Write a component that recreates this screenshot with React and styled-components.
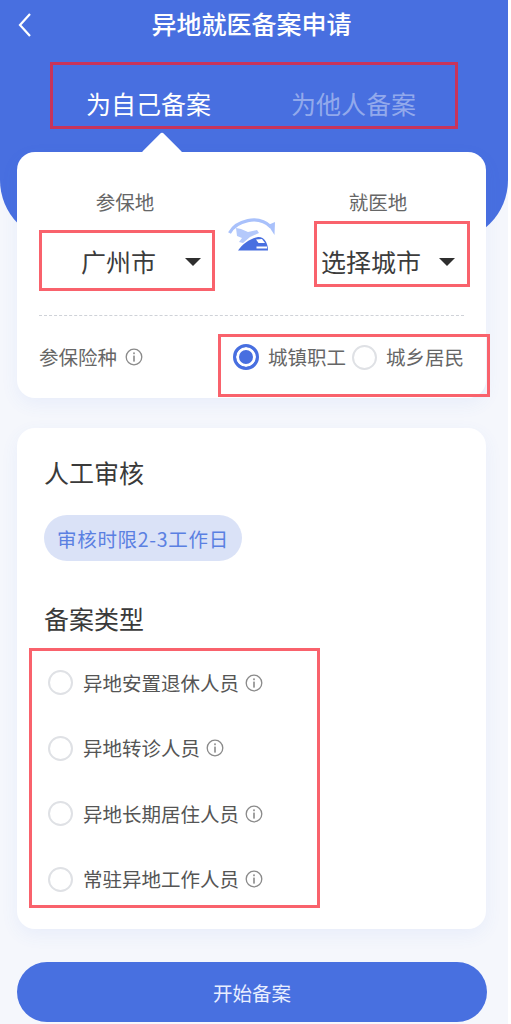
import React from "react";
import styled, { createGlobalStyle } from "styled-components";

const Global = createGlobalStyle`
  html, body { margin: 0; padding: 0; background: #fff; }
  body { font-family: "Noto Sans CJK SC", "Noto Sans", sans-serif; }
`;

const FONT = `"Noto Sans CJK SC", "Noto Sans", sans-serif`;

const Page = styled.div`
  position: relative;
  width: 508px;
  height: 1024px;
  overflow: hidden;
  background: #f5f7fc;
  font-family: ${FONT};
`;
const Hero = styled.div`
  height: 242px;
  margin-bottom: -90px;
  background: #486fe0;
  border-radius: 0 0 62px 62px;
  color: #fff;
`;
const TitleBar = styled.div`
  height: 50px;
  display: flex;
  align-items: center;
  justify-content: center;
  position: relative;
`;
const BackIcon = styled.svg`
  position: absolute;
  left: 17px;
  top: 12px;
`;
const Title = styled.div`
  font-size: 25px;
  font-weight: 500;
  line-height: 50px;
  margin: -4px 0 0 -5px;
`;
const Tabs = styled.div`
  display: flex;
  gap: 80px;
  padding: 30px 0 0 86px;
`;
const Tab = styled.div`
  font-size: 25px;
  line-height: 46px;
  color: ${(p) => (p.$active ? "#fff" : "rgba(255,255,255,0.42)")};
`;
const Card = styled.div`
  position: relative;
  margin: 0 22px 0 17px;
  background: #fff;
  border-radius: 18px;
  box-shadow: 0 6px 18px rgba(72, 111, 224, 0.07);
`;
const Pointer = styled.div`
  position: absolute;
  left: 130px;
  top: -14px;
  width: 30px;
  height: 30px;
  background: #fff;
  border-radius: 3px;
  transform: rotate(45deg);
`;
const LocationCard = styled(Card)`
  height: 246px;
  padding: 0 22px;
  box-sizing: border-box;
`;
const Places = styled.div`
  position: relative;
  display: grid;
  grid-template-columns: 172px 1fr 164px;
  height: 163px;
  border-bottom: 1px dashed #cfd2d8;
`;
const Place = styled.div`
  display: flex;
  flex-direction: column;
  align-items: center;
  padding-top: 37px;
  padding-right: ${(p) => p.$pr || 0}px;
`;
const PlaceLabel = styled.div`
  font-size: 19.5px;
  line-height: 26px;
  color: #666;
`;
const PlaceValue = styled.div`
  display: flex;
  align-items: center;
  gap: ${(p) => p.$gap}px;
  margin-top: 28px;
  margin-left: ${(p) => p.$offset || 0}px;
  font-size: 25px;
  line-height: 36px;
  color: #3c3c3c;
  white-space: nowrap;
`;
const Caret = styled.span`
  display: block;
  margin-top: 2px;
  width: 0;
  height: 0;
  border-left: 8px solid transparent;
  border-right: 8px solid transparent;
  border-top: 8px solid #2f2f2f;
`;
const SwapIcon = styled.svg`
  justify-self: center;
  margin-top: 65px;
  margin-left: -8px;
`;
const InsuranceRow = styled.div`
  display: flex;
  align-items: center;
  height: 82px;
`;
const RowLabel = styled.span`
  font-size: 19.5px;
  color: #666;
  line-height: 26px;
  white-space: nowrap;
`;
const InfoIcon = styled.svg`
  display: block;
  flex: none;
  margin-left: ${(p) => p.$ml}px;
`;
const Choices = styled.div`
  display: flex;
  align-items: center;
  margin-left: 90px;
`;
const Radio = styled.span`
  display: block;
  flex: none;
  box-sizing: border-box;
  width: ${(p) => (p.$checked ? 26 : 25)}px;
  height: ${(p) => (p.$checked ? 26 : 25)}px;
  border-radius: 50%;
  border: ${(p) => (p.$checked ? "3px solid #486fe0" : "2px solid #dfe1e5")};
  background: ${(p) => (p.$checked ? "#486fe0" : "#fff")};
  box-shadow: ${(p) => (p.$checked ? "inset 0 0 0 3px #fff" : "none")};
`;
const ChoiceText = styled.span`
  font-size: 19.5px;
  line-height: 26px;
  color: #666;
  white-space: nowrap;
  margin-left: ${(p) => p.$ml}px;
  margin-right: ${(p) => p.$mr || 0}px;
`;
const TypeCard = styled(Card)`
  margin-top: 30px;
  height: 501px;
  padding: 22px 27px 0;
  box-sizing: border-box;
`;
const SectionTitle = styled.div`
  font-size: 25px;
  line-height: 44px;
  color: #3a3a3a;
`;
const Pill = styled.div`
  display: flex;
  align-items: center;
  width: fit-content;
  height: 46px;
  margin-top: 21px;
  padding: 0 13px;
  border-radius: 23px;
  background: #dae2f7;
  color: #5a80e2;
  font-size: 19.5px;
  letter-spacing: 0.7px;
  white-space: nowrap;
`;
const TypeTitle = styled(SectionTitle)`
  margin-top: 35px;
`;
const TypeList = styled.div`
  display: flex;
  flex-direction: column;
  gap: 40.67px;
  margin-top: 30px;
  padding-left: 4px;
`;
const TypeRow = styled.div`
  display: flex;
  align-items: center;
  height: 25px;
`;
const TypeText = styled.span`
  margin-left: 10px;
  font-size: 19.5px;
  line-height: 26px;
  color: #555;
  white-space: nowrap;
`;
const StartButton = styled.button`
  display: block;
  width: 470px;
  height: 60px;
  margin: 33px 0 0 17px;
  padding: 0;
  border: 0;
  border-radius: 30px;
  background: #4870e0;
  color: #e8eeff;
  font-family: ${FONT};
  font-size: 19.5px;
`;
const Marker = styled.div`
  position: absolute;
  box-sizing: border-box;
  left: ${(p) => p.$x}px;
  top: ${(p) => p.$y}px;
  width: ${(p) => p.$w}px;
  height: ${(p) => p.$h}px;
  border: 3px solid ${(p) => p.$color || "#f9626c"};
  pointer-events: none;
`;

const Info = ({ ml }) => (
  <InfoIcon $ml={ml} width="18" height="18" viewBox="0 0 18 18" fill="none">
    <circle cx="9" cy="9" r="7.8" stroke="#8a8a8a" strokeWidth="1.3" />
    <rect x="8.2" y="7.6" width="1.6" height="6" fill="#8a8a8a" />
    <rect x="8.2" y="4.4" width="1.6" height="1.8" fill="#8a8a8a" />
  </InfoIcon>
);

const types = ["异地安置退休人员", "异地转诊人员", "异地长期居住人员", "常驻异地工作人员"];

export default function App() {
  return (
    <Page>
      <Global />
      <Hero>
        <TitleBar>
          <BackIcon width="16" height="26" viewBox="0 0 16 26" fill="none">
            <path d="M13 2 L3 13 L13 24" stroke="#fff" strokeWidth="2.2" />
          </BackIcon>
          <Title>异地就医备案申请</Title>
        </TitleBar>
        <Tabs>
          <Tab $active>为自己备案</Tab>
          <Tab>为他人备案</Tab>
        </Tabs>
      </Hero>
      <LocationCard>
        <Pointer />
        <Places>
          <Place>
            <PlaceLabel>参保地</PlaceLabel>
            <PlaceValue $gap={29} $offset={32}>广州市<Caret /></PlaceValue>
          </Place>
          <SwapIcon width="48" height="35" viewBox="0 0 48 35" fill="none">
            <path d="M1.5 16 C 8 4, 30 -3, 43 10" stroke="#a9c1fb" strokeWidth="3.2" />
            <path d="M40 8 L47 5 L46.5 18 Z" fill="#a9c1fb" />
            <path d="M8 11 L13 12 L20 15 L29 13 L31 16 L22 20 L15 26 L11 25 L14 21 L9 19 Z" fill="#b4c9fb" />
            <path d="M10 33.5 C 14 27, 23 21, 30 20 C 36 19.5, 40 26, 40 33.5 Z" fill="#486fe0" />
            <path d="M28 22.5 L34 22 L37 26 L30.5 26 Z" fill="#fff" />
            <rect x="28.5" y="29.5" width="10.5" height="2" fill="#fff" />
          </SwapIcon>
          <Place $pr={8}>
            <PlaceLabel>就医地</PlaceLabel>
            <PlaceValue $gap={18} $offset={20}>选择城市<Caret /></PlaceValue>
          </Place>
        </Places>
        <InsuranceRow>
          <RowLabel>参保险种</RowLabel>
          <Info ml={8} />
          <Choices>
            <Radio $checked />
            <ChoiceText $ml={9} $mr={6}>城镇职工</ChoiceText>
            <Radio />
            <ChoiceText $ml={9}>城乡居民</ChoiceText>
          </Choices>
        </InsuranceRow>
      </LocationCard>
      <TypeCard>
        <SectionTitle>人工审核</SectionTitle>
        <Pill>审核时限2-3工作日</Pill>
        <TypeTitle>备案类型</TypeTitle>
        <TypeList>
          {types.map((t) => (
            <TypeRow key={t}>
              <Radio />
              <TypeText>{t}</TypeText>
              <Info ml={6} />
            </TypeRow>
          ))}
        </TypeList>
      </TypeCard>
      <StartButton>开始备案</StartButton>
      <Marker $x={50} $y={62} $w={408} $h={67} $color="#c8345a" />
      <Marker $x={39} $y={230} $w={176} $h={61} />
      <Marker $x={314} $y={221} $w={156} $h={66} />
      <Marker $x={218} $y={334} $w={272} $h={63} />
      <Marker $x={29} $y={648} $w={291} $h={260} />
    </Page>
  );
}
